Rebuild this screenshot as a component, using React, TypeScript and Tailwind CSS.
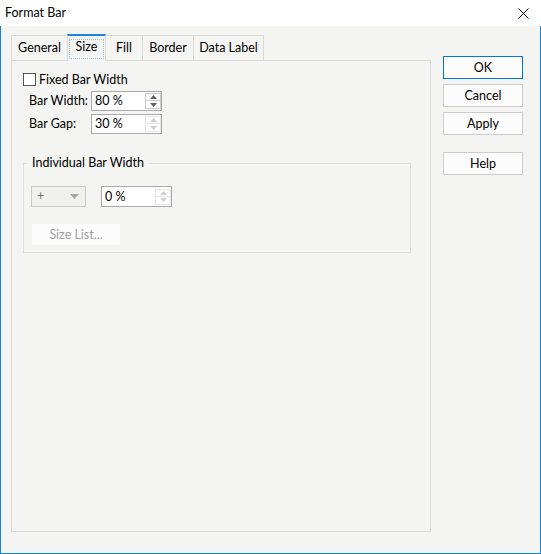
import React from "react";

function Spin({ enabled }: { enabled: boolean }) {
  const c = enabled ? "#606060" : "#cfcfcf";
  const b = enabled ? "border-[#c9c9c9]" : "border-[#e6e6e6]";
  return (
    <div className="flex flex-col">
      <div className={`w-[16px] h-[8px] border ${b} flex items-center justify-center bg-white`}>
        <svg width="7" height="4" viewBox="0 0 7 4">
          <path d="M0 4L3.5 0L7 4Z" fill={c} />
        </svg>
      </div>
      <div className={`w-[16px] h-[8px] border border-t-0 ${b} flex items-center justify-center bg-white`}>
        <svg width="7" height="4" viewBox="0 0 7 4">
          <path d="M0 0L7 0L3.5 4Z" fill={c} />
        </svg>
      </div>
    </div>
  );
}

function NumInput({ value, enabled, h }: { value: string; enabled: boolean; h: string }) {
  return (
    <div className={`w-[71px] ${h} border border-[#a9a9a9] bg-white flex items-center justify-between pl-[3px]`}>
      <span className="text-black leading-none pt-px">{value}</span>
      <Spin enabled={enabled} />
    </div>
  );
}

function Btn({ label, def }: { label: string; def?: boolean }) {
  return (
    <div
      className={`w-[80px] h-[23px] border ${def ? "border-[#0078d7]" : "border-[#cccccc]"} bg-[#fcfcfc] flex items-center justify-center text-black pt-px`}
    >
      {label}
    </div>
  );
}

export default function App() {
  return (
    <div
      className="w-[541px] h-[554px] bg-[#f4f5f2] flex flex-col text-[12.5px] text-black overflow-hidden whitespace-nowrap"
      style={{ fontFamily: 'Lato, "Noto Sans", sans-serif' }}
    >
      <div className="h-[26px] bg-white flex items-center justify-between pl-[5px] pr-[12px] shrink-0">
        <span>Format Bar</span>
        <svg width="11" height="11" viewBox="0 0 11 11">
          <path d="M0.5 0.5L10.5 10.5M10.5 0.5L0.5 10.5" stroke="#000" strokeWidth="1" />
        </svg>
      </div>
      <div className="flex-1 border-l border-r border-b border-[#1883d7] flex items-start">
        <div className="ml-[10px] pt-[8px] w-[420px] flex flex-col">
          <div className="flex items-end h-[26px]">
            <div className="w-[57px] h-[25px] border border-b-0 border-[#d9d9d9] flex items-center justify-center">
              General
            </div>
            <div className="relative z-10 -ml-px -mb-px w-[39px] h-[27px] border-l border-r border-[#d9d9d9] border-t-2 border-t-[#1b87dc] bg-[#f4f5f2] flex items-center justify-center">
              <span className="w-[35px] h-[20px] border border-dotted border-[#a9c9e2] flex items-center justify-center pb-[2px]">
                Size
              </span>
            </div>
            <div className="-ml-px w-[38px] h-[25px] border border-b-0 border-[#d9d9d9] flex items-center justify-center">
              Fill
            </div>
            <div className="-ml-px w-[52px] h-[25px] border border-b-0 border-[#d9d9d9] flex items-center justify-center">
              Border
            </div>
            <div className="-ml-px w-[71px] h-[25px] border border-b-0 border-[#d9d9d9] flex items-center justify-center">
              Data Label
            </div>
          </div>
          <div className="h-[472px] border border-[#d9d9d9] flex flex-col pl-[11px] pt-[12px]">
            <div className="flex items-center h-[13px]">
              <div className="w-[13px] h-[13px] border border-[#555555] bg-white" />
              <span className="ml-[3px] pt-px">Fixed Bar Width</span>
            </div>
            <div className="mt-[5px] flex flex-col gap-[3px]">
              <div className="flex items-center">
                <span className="w-[68px] pl-[6px] pt-px">Bar Width:</span>
                <NumInput value="80 %" enabled h="h-[20px]" />
              </div>
              <div className="flex items-center">
                <span className="w-[68px] pl-[6px] pt-px">Bar Gap:</span>
                <NumInput value="30 %" enabled={false} h="h-[20px]" />
              </div>
            </div>
            <fieldset className="mt-[21px] w-[388px] h-[98px] border border-[#dcdcdc] pl-[7px]">
              <legend className="ml-[-4px] px-[5px] leading-[16px]">Individual Bar Width</legend>
              <div className="mt-[15px] flex items-center">
                <div className="w-[55px] h-[21px] border border-[#c8c8c8] bg-[#f0f1ee] flex items-center justify-between pl-[5px] pr-[6px] text-[#6d6d6d]">
                  <span className="leading-none">+</span>
                  <svg width="9" height="5" viewBox="0 0 9 5">
                    <path d="M0 0L9 0L4.5 5Z" fill="#a6a6a6" />
                  </svg>
                </div>
                <div className="ml-[15px]">
                  <NumInput value="0 %" enabled={false} h="h-[21px]" />
                </div>
              </div>
              <div className="mt-[17px] ml-[1px] w-[88px] h-[21px] bg-[#fcfcfc] flex items-center justify-center text-[#a2a2a2] pt-px">
                Size List...
              </div>
            </fieldset>
          </div>
        </div>
        <div className="ml-[12px] pt-[30px] flex flex-col">
          <Btn label="OK" def />
          <div className="mt-[5px]">
            <Btn label="Cancel" />
          </div>
          <div className="mt-[5px]">
            <Btn label="Apply" />
          </div>
          <div className="mt-[17px]">
            <Btn label="Help" />
          </div>
        </div>
      </div>
    </div>
  );
}
